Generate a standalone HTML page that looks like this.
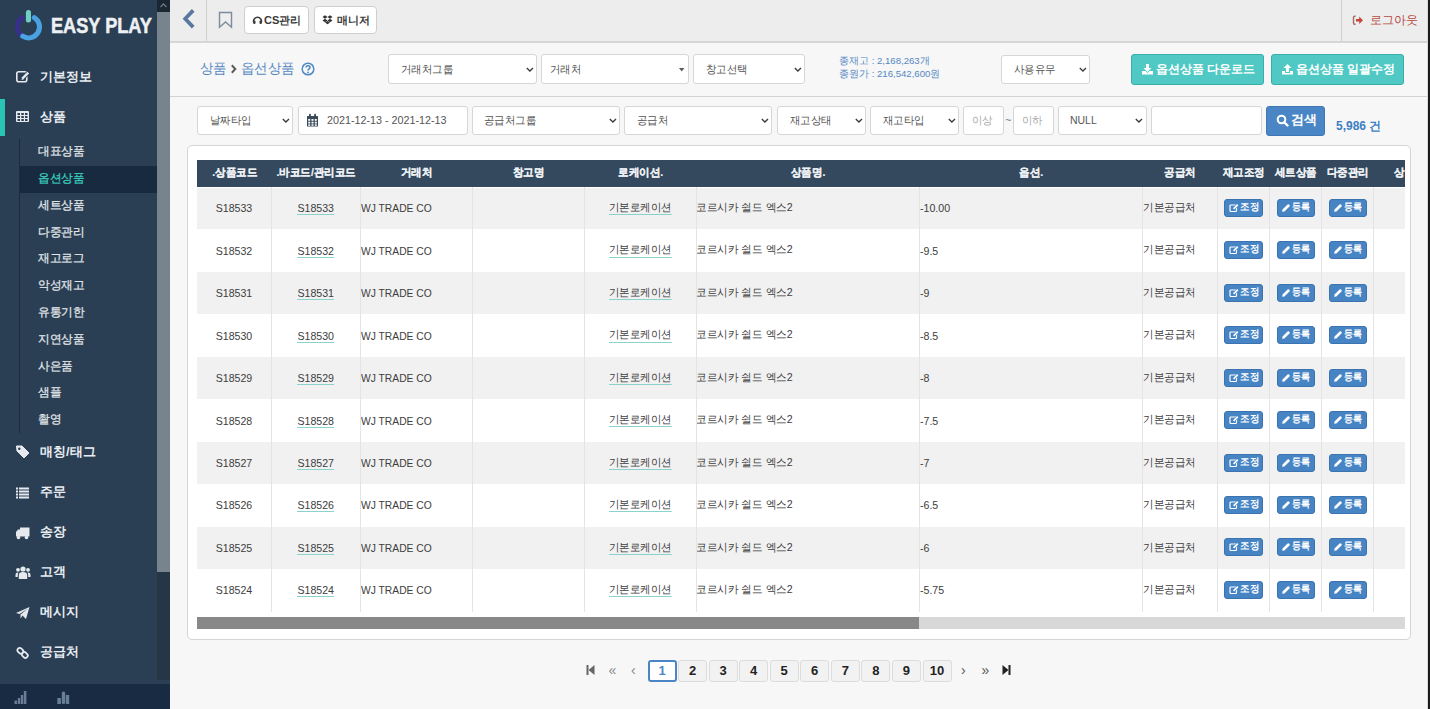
<!DOCTYPE html><html><head><meta charset="utf-8"><style>
*{box-sizing:border-box;margin:0;padding:0}
html,body{width:1430px;height:709px;overflow:hidden;background:#f7f7f7;font-family:"Liberation Sans",sans-serif;color:#73879c;position:relative}
div,span{position:absolute;white-space:nowrap}
.mi{left:40px;font-size:13px;font-weight:bold;color:#e9edf1;line-height:20px}
.sub{left:38px;font-size:12px;transform:scaleX(0.975);transform-origin:0 0;color:#e2e6ea;line-height:18px}
.ic{left:16px}
.hbtn{top:6px;height:28px;background:#fff;border:1px solid #cfcfcf;border-radius:4px;font-size:12px;font-weight:bold;color:#333;line-height:26px}
.sel{background:#fff;border:1px solid #d6d6d6;border-radius:3px;font-size:11.5px;color:#555;line-height:28px}
.chev{width:6px;height:6px;border-right:1.6px solid #333;border-bottom:1.6px solid #333;transform:rotate(45deg)}
.tbtn{top:54px;height:31px;background:#50c9c4;border:1px solid #3aaea9;border-radius:3px;color:#fff;font-size:13px;font-weight:bold;line-height:29px}
.th{top:159px;height:27px;line-height:27px;color:#eef1f4;font-size:11px;transform:scaleX(0.955) translateX(0.7px);-webkit-text-stroke:0.2px #eef1f4;font-weight:bold;text-align:center}
.row{left:197px;width:1208px}
.cb{width:1px;background:#e4e4e4}
.td{font-size:10.6px;color:#3d3d3d;line-height:16px}
.lnk{border-bottom:1px solid #8ad2cc}
.bb{width:39px;height:18px;background:#4784c4;border:1px solid #3a73b0;border-radius:3px;color:#fff;font-size:10px;font-weight:bold;line-height:16px;text-align:center}
.pg{top:660px;width:29px;height:22px;border:1px solid #dcdcdc;background:#f2f2f2;border-radius:3px;font-size:13px;font-weight:bold;color:#222;text-align:center;line-height:20px}
</style></head><body>
<div style="left:0;top:0;width:170px;height:709px;background:#2a3f54"></div>
<div style="left:157px;top:0;width:13px;height:680px;background:#253647"></div>
<div style="left:157px;top:0;width:13px;height:12px;background:#1a2632"></div>
<svg style="position:absolute;left:157px;top:0" width="13" height="12"><path d="M3.5 7 L6.5 4 L9.5 7" stroke="#6b7580" stroke-width="1.3" fill="none"/></svg>
<div style="left:157px;top:12px;width:13px;height:560px;background:#77838d"></div>
<div style="left:0;top:684px;width:170px;height:25px;background:#182b42"></div>
<svg style="position:absolute;left:0;top:684px" width="170" height="25"><g fill="#687d96"><rect x="14.5" y="16.5" width="2.5" height="3.5"/><rect x="17.8" y="14" width="2.4" height="6"/><rect x="20.8" y="11" width="2.4" height="9"/><rect x="23.8" y="7" width="2.6" height="13"/><rect x="57.3" y="14" width="3.6" height="6"/><rect x="61.8" y="7.5" width="3.4" height="12.5" rx="1.5"/><rect x="65.8" y="11" width="3.4" height="9"/></g></svg>
<svg style="position:absolute;left:10px;top:6px" width="40" height="40" viewBox="0 0 40 40"><path d="M13.82 10.8 A11 11 0 0 0 12.73 30.23" stroke="#372e8e" stroke-width="4.6" fill="none"/><path d="M12.73 30.23 A11 11 0 0 0 24.31 11.52" stroke="#4aa2e2" stroke-width="5" fill="none" stroke-linecap="round"/><rect x="15.9" y="3.9" width="5.1" height="12.7" rx="2.5" fill="#70cfc4"/></svg>
<div style="left:51px;top:10.5px;font-size:22px;font-weight:bold;color:#eef1f4;line-height:30px;transform-origin:0 0;transform:scaleX(0.825);-webkit-text-stroke:0.5px #eef1f4">EASY PLAY</div>
<svg style="position:absolute;left:14px;top:68px" width="18" height="18" viewBox="0 0 18 18"><rect x="2.8" y="3.8" width="10" height="10" rx="2" stroke="#e6eaee" stroke-width="1.6" fill="none"/><path d="M8 11 L14.5 4.5" stroke="#2a3f54" stroke-width="4"/><path d="M8.3 10.7 L14.3 4.7" stroke="#e6eaee" stroke-width="2.4"/><path d="M7.5 12 L8 10 L9.5 11.5Z" fill="#e6eaee"/></svg>
<svg style="position:absolute;left:14px;top:108px" width="18" height="18" viewBox="0 0 18 18"><rect x="2" y="3" width="13" height="11" rx="1" fill="#e6eaee"/><g fill="#2a3f54"><rect x="3.5" y="5" width="2.5" height="2"/><rect x="7.3" y="5" width="2.5" height="2"/><rect x="11" y="5" width="2.5" height="2"/><rect x="3.5" y="8" width="2.5" height="2"/><rect x="7.3" y="8" width="2.5" height="2"/><rect x="11" y="8" width="2.5" height="2"/><rect x="3.5" y="11" width="2.5" height="2"/><rect x="7.3" y="11" width="2.5" height="2"/><rect x="11" y="11" width="2.5" height="2"/></g></svg>
<svg style="position:absolute;left:14px;top:443px" width="18" height="18" viewBox="0 0 18 18"><path d="M2.5 3 L8 3 L15 10 L10 15 L3 8 Z" fill="#e6eaee" stroke="#e6eaee" stroke-width="1" stroke-linejoin="round"/><circle cx="5.3" cy="5.8" r="1.2" fill="#2a3f54"/></svg>
<svg style="position:absolute;left:14px;top:484px" width="18" height="18" viewBox="0 0 18 18"><g fill="#e6eaee"><rect x="2" y="3.5" width="2" height="2"/><rect x="5" y="3.5" width="10" height="2"/><rect x="2" y="6.5" width="2" height="2"/><rect x="5" y="6.5" width="10" height="2"/><rect x="2" y="9.5" width="2" height="2"/><rect x="5" y="9.5" width="10" height="2"/><rect x="2" y="12.5" width="2" height="2"/><rect x="5" y="12.5" width="10" height="2"/></g></svg>
<svg style="position:absolute;left:14px;top:524px" width="18" height="18" viewBox="0 0 18 18"><g fill="#e6eaee"><path d="M6 3.5 H15.5 V12.5 H6 Z"/><path d="M2 8 L4 5.5 H6 V12.5 H2 Z"/><circle cx="4.5" cy="13.5" r="1.8"/><circle cx="12.5" cy="13.5" r="1.8"/></g></svg>
<svg style="position:absolute;left:14px;top:564px" width="18" height="18" viewBox="0 0 18 18"><g fill="#e6eaee"><circle cx="9" cy="5" r="2.6"/><circle cx="4" cy="5.8" r="1.9"/><circle cx="14" cy="5.8" r="1.9"/><path d="M4.8 15 V11 Q4.8 8 9 8 Q13.2 8 13.2 11 V15Z"/><path d="M1.5 13 V10.5 Q1.5 8.4 4 8.4 L4.6 8.6 Q3.8 9.6 3.8 11 V13Z"/><path d="M16.5 13 V10.5 Q16.5 8.4 14 8.4 L13.4 8.6 Q14.2 9.6 14.2 11 V13Z"/></g></svg>
<svg style="position:absolute;left:14px;top:604px" width="18" height="18" viewBox="0 0 18 18"><path d="M2 9 L15.5 3 L12 15 L8.5 11.5 L6.5 14.5 L6.5 10.5 L14 4.5 L5.5 10 Z" fill="#e6eaee"/></svg>
<svg style="position:absolute;left:14px;top:644px" width="18" height="18" viewBox="0 0 18 18"><g stroke="#e6eaee" stroke-width="1.8" fill="none"><rect x="3.2" y="4.5" width="6.2" height="4.6" rx="2" transform="rotate(45 6.3 6.8)"/><rect x="7.7" y="8.7" width="6.2" height="4.6" rx="2" transform="rotate(45 10.8 11)"/></g></svg>
<div style="left:0;top:99px;width:4.5px;height:37px;background:#2bc5b6"></div>
<div class="mi" style="top:66.5px">기본정보</div>
<div class="mi" style="top:106.5px">상품</div>
<div class="mi" style="top:441.5px">매칭/태그</div>
<div class="mi" style="top:482.0px">주문</div>
<div class="mi" style="top:522.0px">송장</div>
<div class="mi" style="top:562.0px">고객</div>
<div class="mi" style="top:602.0px">메시지</div>
<div class="mi" style="top:642.0px">공급처</div>
<div style="left:18.7px;top:139px;width:1.4px;height:294px;background:#1d2c3c"></div>
<div style="left:20px;top:166px;width:137px;height:27px;background:#172a40"></div>
<div class="sub" style="top:142.2px;color:#e2e6ea;-webkit-text-stroke:0.25px #e2e6ea">대표상품</div>
<div class="sub" style="top:169.0px;color:#3ccdbd;-webkit-text-stroke:0.25px #3ccdbd">옵션상품</div>
<div class="sub" style="top:195.8px;color:#e2e6ea;-webkit-text-stroke:0.25px #e2e6ea">세트상품</div>
<div class="sub" style="top:222.6px;color:#e2e6ea;-webkit-text-stroke:0.25px #e2e6ea">다중관리</div>
<div class="sub" style="top:249.4px;color:#e2e6ea;-webkit-text-stroke:0.25px #e2e6ea">재고로그</div>
<div class="sub" style="top:276.2px;color:#e2e6ea;-webkit-text-stroke:0.25px #e2e6ea">악성재고</div>
<div class="sub" style="top:303.0px;color:#e2e6ea;-webkit-text-stroke:0.25px #e2e6ea">유통기한</div>
<div class="sub" style="top:329.8px;color:#e2e6ea;-webkit-text-stroke:0.25px #e2e6ea">지연상품</div>
<div class="sub" style="top:356.6px;color:#e2e6ea;-webkit-text-stroke:0.25px #e2e6ea">사은품</div>
<div class="sub" style="top:383.4px;color:#e2e6ea;-webkit-text-stroke:0.25px #e2e6ea">샘플</div>
<div class="sub" style="top:410.2px;color:#e2e6ea;-webkit-text-stroke:0.25px #e2e6ea">촬영</div>
<div style="left:170px;top:0;width:1258px;height:41px;background:#ededed"></div>
<div style="left:170px;top:41px;width:1258px;height:1.5px;background:#d6d6d6"></div>
<div style="left:206px;top:0;width:1px;height:41px;background:#cfcfcf"></div>
<div style="left:1341px;top:0;width:1px;height:41px;background:#cfcfcf"></div>
<svg style="position:absolute;left:180px;top:8px" width="18" height="22"><path d="M13.2 2.4 L5.2 10.8 L13.2 19.1" stroke="#5878a0" stroke-width="3.7" fill="none"/></svg>
<svg style="position:absolute;left:216px;top:10px" width="19" height="20"><path d="M3.5 2.5 H15.5 V17.3 L9.5 12 L3.5 17.3 Z" stroke="#7d8c9c" stroke-width="1.4" fill="none" stroke-linejoin="miter"/></svg>
<div class="hbtn" style="left:244px;width:65px"></div>
<svg style="position:absolute;left:251.5px;top:15px" width="11" height="10" viewBox="0 0 11 10"><path d="M1.7 7.6 A4 4 0 1 1 9.3 7.6" stroke="#3a3a3a" stroke-width="1.5" fill="none"/><rect x="1.2" y="5.6" width="2.3" height="3.4" rx="0.9" fill="#3a3a3a"/><rect x="7.5" y="5.6" width="2.3" height="3.4" rx="0.9" fill="#3a3a3a"/></svg>
<div style="left:264px;top:12px;font-size:11px;font-weight:bold;color:#3a3a3a;line-height:16px">CS관리</div>
<div class="hbtn" style="left:314px;width:63px"></div>
<svg style="position:absolute;left:322px;top:14px" width="11" height="11" viewBox="0 0 11 11"><g fill="#333"><path d="M0.5 3 L3 1.3 L5.5 3 L3 4.7Z"/><path d="M5.5 3 L8 1.3 L10.5 3 L8 4.7Z"/><path d="M0.5 6.5 L3 4.8 L5.5 6.5 L3 8.2Z"/><path d="M5.5 6.5 L8 4.8 L10.5 6.5 L8 8.2Z"/><path d="M3 8.6 L5.5 7 L8 8.6 L5.5 10.3Z"/></g></svg>
<div style="left:336.5px;top:12px;font-size:11px;font-weight:bold;color:#3a3a3a;line-height:16px">매니저</div>
<svg style="position:absolute;left:1352px;top:15px" width="12" height="11" viewBox="0 0 12 11"><path d="M3.6 1.3 H2.6 Q1.5 1.3 1.5 2.5 V8 Q1.5 9.2 2.6 9.2 H3.6" stroke="#a86a60" stroke-width="1.4" fill="none"/><path d="M4 4.1 H7.2 V1.6 L11 5.25 L7.2 8.9 V6.4 H4Z" fill="#c4463a"/></svg>
<div style="left:1370px;top:11.5px;font-size:11.5px;color:#b54a3f;line-height:16px">로그아웃</div>
<div style="left:1427px;top:0;width:1px;height:709px;background:#dcdcdc"></div>
<div style="left:1428px;top:0;width:2px;height:709px;background:#1a1a1a"></div>
<div style="left:199.5px;top:58.5px;font-size:14px;color:#5587c2;line-height:18px;transform:scaleX(0.96);transform-origin:0 0">상품</div>
<svg style="position:absolute;left:229px;top:63px" width="9" height="12"><path d="M2.8 2.3 L6.3 6 L2.8 9.7" stroke="#5a5a5a" stroke-width="2" fill="none"/></svg>
<div style="left:240.5px;top:58.5px;font-size:14px;color:#5587c2;line-height:18px;transform:scaleX(0.96);transform-origin:0 0">옵선상품</div>
<svg style="position:absolute;left:301px;top:61.5px" width="14" height="14" viewBox="0 0 14 14"><circle cx="7" cy="7" r="5.8" stroke="#4f88c6" stroke-width="1.5" fill="none"/><path d="M5 5.6 Q5 3.8 7 3.8 Q9 3.8 9 5.5 Q9 6.6 7.6 7.2 Q7 7.5 7 8.6" stroke="#4f88c6" stroke-width="1.5" fill="none"/><circle cx="7" cy="10.4" r="0.9" fill="#4f88c6"/></svg>
<div class="sel" style="left:388.0px;top:54.0px;width:149.0px;height:30.0px"></div>
<div style="left:401.0px;top:60.5px;font-size:11px;color:#555;line-height:16px;transform:scaleX(0.95);transform-origin:0 0">거래처그룹</div>
<svg style="position:absolute;left:525.8px;top:66.7px" width="9" height="6"><path d="M0.8 1 L3.9 4 L7 1" stroke="#3a3a3a" stroke-width="1.35" fill="none"/></svg>
<div class="sel" style="left:541.0px;top:54.0px;width:148.0px;height:30.0px"></div>
<div style="left:550.0px;top:60.5px;font-size:11px;color:#555;line-height:16px;transform:scaleX(0.95);transform-origin:0 0">거래처</div>
<svg style="position:absolute;left:678.6px;top:68.2px" width="6" height="4"><path d="M0 0 H5.4 L2.7 3.6Z" fill="#5a5a5a"/></svg>
<div class="sel" style="left:693.0px;top:54.0px;width:112.0px;height:30.0px"></div>
<div style="left:706.0px;top:60.5px;font-size:11px;color:#555;line-height:16px;transform:scaleX(0.95);transform-origin:0 0">창고선택</div>
<svg style="position:absolute;left:793.8px;top:66.7px" width="9" height="6"><path d="M0.8 1 L3.9 4 L7 1" stroke="#3a3a3a" stroke-width="1.35" fill="none"/></svg>
<div style="left:839px;top:53.7px;font-size:9.6px;color:#5588c4;line-height:13.7px">종재고 : 2,168,263개<br>종원가 : 216,542,600원</div>
<div class="sel" style="left:1001.0px;top:54.5px;width:89.0px;height:29.5px"></div>
<div style="left:1014.0px;top:60.8px;font-size:11px;color:#555;line-height:16px;transform:scaleX(0.95);transform-origin:0 0">사용유무</div>
<svg style="position:absolute;left:1078.8px;top:67.0px" width="9" height="6"><path d="M0.8 1 L3.9 4 L7 1" stroke="#3a3a3a" stroke-width="1.35" fill="none"/></svg>
<div class="tbtn" style="left:1131px;width:133px"></div>
<svg style="position:absolute;left:1141px;top:63px" width="13" height="12" viewBox="0 0 13 12"><g fill="#fff"><path d="M5 1 H8 V5 H10.5 L6.5 9 L2.5 5 H5Z"/><path d="M1 8 H4.5 L6.5 10 L8.5 8 H12 V11.5 H1Z"/></g></svg>
<div style="left:1156px;top:61px;font-size:12px;font-weight:bold;color:#fff;line-height:16px">옵션상품 다운로드</div>
<div class="tbtn" style="left:1271px;width:133px"></div>
<svg style="position:absolute;left:1281px;top:63px" width="13" height="12" viewBox="0 0 13 12"><g fill="#fff"><path d="M5 9 H8 V5 H10.5 L6.5 1 L2.5 5 H5Z"/><path d="M1 8 H4 V10 H9 V8 H12 V11.5 H1Z"/></g></svg>
<div style="left:1296px;top:61px;font-size:12px;font-weight:bold;color:#fff;line-height:16px">옵션상품 일괄수정</div>
<div style="left:170px;top:96px;width:1257px;height:1px;background:#d2d2d2"></div>
<div class="sel" style="left:197.0px;top:106.0px;width:96.0px;height:29.0px"></div>
<div style="left:210.0px;top:112.0px;font-size:11px;color:#555;line-height:16px;transform:scaleX(0.95);transform-origin:0 0">날짜타입</div>
<svg style="position:absolute;left:281.8px;top:118.2px" width="9" height="6"><path d="M0.8 1 L3.9 4 L7 1" stroke="#3a3a3a" stroke-width="1.35" fill="none"/></svg>
<div class="sel" style="left:297.5px;top:106.0px;width:170.0px;height:29.0px"></div>
<div style="left:327.0px;top:112.0px;font-size:10.75px;color:#555;line-height:16px;transform:scaleX(1);transform-origin:0 0">2021-12-13 - 2021-12-13</div>
<svg style="position:absolute;left:306px;top:113px" width="13" height="14" viewBox="0 0 13 14"><g fill="#3b4a5a"><rect x="1" y="3" width="11" height="10.5" rx="0.5"/><rect x="3" y="0.8" width="1.8" height="3.5" rx="0.8"/><rect x="8.2" y="0.8" width="1.8" height="3.5" rx="0.8"/></g><g fill="#fff"><rect x="2.2" y="6" width="2" height="1.8"/><rect x="5.5" y="6" width="2" height="1.8"/><rect x="8.8" y="6" width="2" height="1.8"/><rect x="2.2" y="8.7" width="2" height="1.8"/><rect x="5.5" y="8.7" width="2" height="1.8"/><rect x="8.8" y="8.7" width="2" height="1.8"/><rect x="2.2" y="11.3" width="2" height="1.5"/><rect x="5.5" y="11.3" width="2" height="1.5"/><rect x="8.8" y="11.3" width="2" height="1.5"/></g></svg>
<div class="sel" style="left:471.5px;top:106.0px;width:148.5px;height:29.0px"></div>
<div style="left:484.0px;top:112.0px;font-size:11px;color:#555;line-height:16px;transform:scaleX(0.95);transform-origin:0 0">공급처그룹</div>
<svg style="position:absolute;left:608.8px;top:118.2px" width="9" height="6"><path d="M0.8 1 L3.9 4 L7 1" stroke="#3a3a3a" stroke-width="1.35" fill="none"/></svg>
<div class="sel" style="left:624.0px;top:106.0px;width:148.0px;height:29.0px"></div>
<div style="left:637.0px;top:112.0px;font-size:11px;color:#555;line-height:16px;transform:scaleX(0.95);transform-origin:0 0">공급처</div>
<svg style="position:absolute;left:760.8px;top:118.2px" width="9" height="6"><path d="M0.8 1 L3.9 4 L7 1" stroke="#3a3a3a" stroke-width="1.35" fill="none"/></svg>
<div class="sel" style="left:777.0px;top:106.0px;width:89.0px;height:29.0px"></div>
<div style="left:790.0px;top:112.0px;font-size:11px;color:#555;line-height:16px;transform:scaleX(0.95);transform-origin:0 0">재고상태</div>
<svg style="position:absolute;left:854.8px;top:118.2px" width="9" height="6"><path d="M0.8 1 L3.9 4 L7 1" stroke="#3a3a3a" stroke-width="1.35" fill="none"/></svg>
<div class="sel" style="left:870.0px;top:106.0px;width:89.0px;height:29.0px"></div>
<div style="left:883.0px;top:112.0px;font-size:11px;color:#555;line-height:16px;transform:scaleX(0.95);transform-origin:0 0">재고타입</div>
<svg style="position:absolute;left:947.8px;top:118.2px" width="9" height="6"><path d="M0.8 1 L3.9 4 L7 1" stroke="#3a3a3a" stroke-width="1.35" fill="none"/></svg>
<div class="sel" style="left:963.0px;top:106.0px;width:41.0px;height:29.0px"></div>
<div style="left:972.0px;top:112.0px;font-size:11px;color:#aaa;line-height:16px;transform:scaleX(0.95);transform-origin:0 0">이상</div>
<div style="left:1005px;top:112px;font-size:11px;color:#777;line-height:16px">~</div>
<div class="sel" style="left:1013.0px;top:106.0px;width:40.5px;height:29.0px"></div>
<div style="left:1022.0px;top:112.0px;font-size:11px;color:#aaa;line-height:16px;transform:scaleX(0.95);transform-origin:0 0">이하</div>
<div class="sel" style="left:1058.0px;top:106.0px;width:88.5px;height:29.0px"></div>
<div style="left:1070.0px;top:112.0px;font-size:11px;color:#555;line-height:16px;transform:scaleX(0.95);transform-origin:0 0">NULL</div>
<svg style="position:absolute;left:1135.3px;top:118.2px" width="9" height="6"><path d="M0.8 1 L3.9 4 L7 1" stroke="#3a3a3a" stroke-width="1.35" fill="none"/></svg>
<div class="sel" style="left:1151.0px;top:106.0px;width:111.0px;height:29.0px"></div>
<div style="left:1160.0px;top:112.0px;font-size:11px;color:#555;line-height:16px;transform:scaleX(0.95);transform-origin:0 0"></div>
<div style="left:1266px;top:105.5px;width:58.5px;height:30.5px;background:#4a86c6;border:1px solid #3f78b5;border-radius:3px"></div>
<svg style="position:absolute;left:1276px;top:114px" width="13" height="13" viewBox="0 0 13 13"><circle cx="5.5" cy="5.5" r="3.8" stroke="#fff" stroke-width="2" fill="none"/><path d="M8.3 8.3 L11.5 11.5" stroke="#fff" stroke-width="2.4" stroke-linecap="round"/></svg>
<div style="left:1291px;top:112px;font-size:13px;font-weight:bold;color:#fff;line-height:16px">검색</div>
<div style="left:1336px;top:117.5px;font-size:12px;font-weight:bold;color:#3d7fc1;line-height:16px">5,986 건</div>
<div style="left:187px;top:145px;width:1224px;height:495px;background:#fff;border:1px solid #d4d4d4;border-radius:5px"></div>
<div style="left:197px;top:160px;width:1208px;height:27px;background:#34495e"></div>
<div class="th" style="left:197.0px;width:74.0px">.상품코드</div>
<div class="th" style="left:271.0px;width:89.0px">.바코드/관리코드</div>
<div class="th" style="left:360.0px;width:112.0px">거래처</div>
<div class="th" style="left:472.0px;width:112.0px">창고명</div>
<div class="th" style="left:584.0px;width:112.0px">로케이션.</div>
<div class="th" style="left:696.0px;width:223.0px">상품명.</div>
<div class="th" style="left:919.0px;width:223.0px">옵션.</div>
<div class="th" style="left:1142.0px;width:75.0px">공급처</div>
<div class="th" style="left:1217.0px;width:52.0px">재고조정</div>
<div class="th" style="left:1269.0px;width:52.0px">세트상품</div>
<div class="th" style="left:1321.0px;width:52.0px">다중관리</div>
<div class="th" style="left:1393px;text-align:left">상</div>
<div class="row" style="top:188.0px;height:41.45px;background:#f1f1f1"></div>
<div class="td" style="left:197px;width:74px;text-align:center;top:200.2px">S18533</div>
<div class="td" style="left:271px;width:89.5px;text-align:center;top:200.2px"><span class="lnk" style="position:static">S18533</span></div>
<div class="td" style="left:361px;top:201.2px;font-size:10.3px">WJ TRADE CO</div>
<div class="td" style="left:608.5px;top:198.9px;font-size:11px;transform:scaleX(0.95);transform-origin:0 0"><span class="lnk" style="position:static;padding-bottom:1.3px">기본로케이션</span></div>
<div class="td" style="left:695.5px;top:198.9px;font-size:11px;transform:scaleX(0.965);transform-origin:0 0">코르시카 쉴드 엑스2</div>
<div class="td" style="left:920px;top:200.2px">-10.00</div>
<div class="td" style="left:1143px;top:198.9px;font-size:11px;transform:scaleX(0.955);transform-origin:0 0">기본공급처</div>
<div class="bb" style="left:1223.5px;top:198.8px;width:39px"></div>
<svg style="position:absolute;left:1228.5px;top:202.8px" width="10" height="10" viewBox="0 0 10 10"><rect x="1" y="2" width="6.5" height="6.5" rx="1" stroke="#fff" stroke-width="1.2" fill="none"/><path d="M4.5 6 L9 1.5" stroke="#4784c4" stroke-width="2.8"/><path d="M4.6 5.9 L8.8 1.7" stroke="#fff" stroke-width="1.7"/></svg>
<div style="left:1239.5px;top:199.8px;font-size:10px;font-weight:bold;color:#fff;line-height:14px;transform:scaleX(0.95);transform-origin:0 0">조정</div>
<div class="bb" style="left:1276.5px;top:198.8px;width:38px"></div>
<svg style="position:absolute;left:1280.7px;top:202.8px" width="10" height="10" viewBox="0 0 10 10"><path d="M1.2 8.8 L1.5 6.6 L6.6 1.5 Q7.3 0.8 8 1.5 L8.5 2 Q9.2 2.7 8.5 3.4 L3.4 8.5 Z" fill="#fff"/></svg>
<div style="left:1291.5px;top:199.8px;font-size:10px;font-weight:bold;color:#fff;line-height:14px;transform:scaleX(0.9);transform-origin:0 0">등록</div>
<div class="bb" style="left:1328.5px;top:198.8px;width:38px"></div>
<svg style="position:absolute;left:1332.7px;top:202.8px" width="10" height="10" viewBox="0 0 10 10"><path d="M1.2 8.8 L1.5 6.6 L6.6 1.5 Q7.3 0.8 8 1.5 L8.5 2 Q9.2 2.7 8.5 3.4 L3.4 8.5 Z" fill="#fff"/></svg>
<div style="left:1343.5px;top:199.8px;font-size:10px;font-weight:bold;color:#fff;line-height:14px;transform:scaleX(0.9);transform-origin:0 0">등록</div>
<div class="td" style="left:197px;width:74px;text-align:center;top:242.7px">S18532</div>
<div class="td" style="left:271px;width:89.5px;text-align:center;top:242.7px"><span class="lnk" style="position:static">S18532</span></div>
<div class="td" style="left:361px;top:243.7px;font-size:10.3px">WJ TRADE CO</div>
<div class="td" style="left:608.5px;top:241.4px;font-size:11px;transform:scaleX(0.95);transform-origin:0 0"><span class="lnk" style="position:static;padding-bottom:1.3px">기본로케이션</span></div>
<div class="td" style="left:695.5px;top:241.4px;font-size:11px;transform:scaleX(0.965);transform-origin:0 0">코르시카 쉴드 엑스2</div>
<div class="td" style="left:920px;top:242.7px">-9.5</div>
<div class="td" style="left:1143px;top:241.4px;font-size:11px;transform:scaleX(0.955);transform-origin:0 0">기본공급처</div>
<div class="bb" style="left:1223.5px;top:241.2px;width:39px"></div>
<svg style="position:absolute;left:1228.5px;top:245.2px" width="10" height="10" viewBox="0 0 10 10"><rect x="1" y="2" width="6.5" height="6.5" rx="1" stroke="#fff" stroke-width="1.2" fill="none"/><path d="M4.5 6 L9 1.5" stroke="#4784c4" stroke-width="2.8"/><path d="M4.6 5.9 L8.8 1.7" stroke="#fff" stroke-width="1.7"/></svg>
<div style="left:1239.5px;top:242.2px;font-size:10px;font-weight:bold;color:#fff;line-height:14px;transform:scaleX(0.95);transform-origin:0 0">조정</div>
<div class="bb" style="left:1276.5px;top:241.2px;width:38px"></div>
<svg style="position:absolute;left:1280.7px;top:245.2px" width="10" height="10" viewBox="0 0 10 10"><path d="M1.2 8.8 L1.5 6.6 L6.6 1.5 Q7.3 0.8 8 1.5 L8.5 2 Q9.2 2.7 8.5 3.4 L3.4 8.5 Z" fill="#fff"/></svg>
<div style="left:1291.5px;top:242.2px;font-size:10px;font-weight:bold;color:#fff;line-height:14px;transform:scaleX(0.9);transform-origin:0 0">등록</div>
<div class="bb" style="left:1328.5px;top:241.2px;width:38px"></div>
<svg style="position:absolute;left:1332.7px;top:245.2px" width="10" height="10" viewBox="0 0 10 10"><path d="M1.2 8.8 L1.5 6.6 L6.6 1.5 Q7.3 0.8 8 1.5 L8.5 2 Q9.2 2.7 8.5 3.4 L3.4 8.5 Z" fill="#fff"/></svg>
<div style="left:1343.5px;top:242.2px;font-size:10px;font-weight:bold;color:#fff;line-height:14px;transform:scaleX(0.9);transform-origin:0 0">등록</div>
<div class="row" style="top:271.9px;height:42.45px;background:#f1f1f1"></div>
<div class="td" style="left:197px;width:74px;text-align:center;top:285.1px">S18531</div>
<div class="td" style="left:271px;width:89.5px;text-align:center;top:285.1px"><span class="lnk" style="position:static">S18531</span></div>
<div class="td" style="left:361px;top:286.1px;font-size:10.3px">WJ TRADE CO</div>
<div class="td" style="left:608.5px;top:283.8px;font-size:11px;transform:scaleX(0.95);transform-origin:0 0"><span class="lnk" style="position:static;padding-bottom:1.3px">기본로케이션</span></div>
<div class="td" style="left:695.5px;top:283.8px;font-size:11px;transform:scaleX(0.965);transform-origin:0 0">코르시카 쉴드 엑스2</div>
<div class="td" style="left:920px;top:285.1px">-9</div>
<div class="td" style="left:1143px;top:283.8px;font-size:11px;transform:scaleX(0.955);transform-origin:0 0">기본공급처</div>
<div class="bb" style="left:1223.5px;top:283.6px;width:39px"></div>
<svg style="position:absolute;left:1228.5px;top:287.6px" width="10" height="10" viewBox="0 0 10 10"><rect x="1" y="2" width="6.5" height="6.5" rx="1" stroke="#fff" stroke-width="1.2" fill="none"/><path d="M4.5 6 L9 1.5" stroke="#4784c4" stroke-width="2.8"/><path d="M4.6 5.9 L8.8 1.7" stroke="#fff" stroke-width="1.7"/></svg>
<div style="left:1239.5px;top:284.6px;font-size:10px;font-weight:bold;color:#fff;line-height:14px;transform:scaleX(0.95);transform-origin:0 0">조정</div>
<div class="bb" style="left:1276.5px;top:283.6px;width:38px"></div>
<svg style="position:absolute;left:1280.7px;top:287.6px" width="10" height="10" viewBox="0 0 10 10"><path d="M1.2 8.8 L1.5 6.6 L6.6 1.5 Q7.3 0.8 8 1.5 L8.5 2 Q9.2 2.7 8.5 3.4 L3.4 8.5 Z" fill="#fff"/></svg>
<div style="left:1291.5px;top:284.6px;font-size:10px;font-weight:bold;color:#fff;line-height:14px;transform:scaleX(0.9);transform-origin:0 0">등록</div>
<div class="bb" style="left:1328.5px;top:283.6px;width:38px"></div>
<svg style="position:absolute;left:1332.7px;top:287.6px" width="10" height="10" viewBox="0 0 10 10"><path d="M1.2 8.8 L1.5 6.6 L6.6 1.5 Q7.3 0.8 8 1.5 L8.5 2 Q9.2 2.7 8.5 3.4 L3.4 8.5 Z" fill="#fff"/></svg>
<div style="left:1343.5px;top:284.6px;font-size:10px;font-weight:bold;color:#fff;line-height:14px;transform:scaleX(0.9);transform-origin:0 0">등록</div>
<div class="td" style="left:197px;width:74px;text-align:center;top:327.6px">S18530</div>
<div class="td" style="left:271px;width:89.5px;text-align:center;top:327.6px"><span class="lnk" style="position:static">S18530</span></div>
<div class="td" style="left:361px;top:328.6px;font-size:10.3px">WJ TRADE CO</div>
<div class="td" style="left:608.5px;top:326.3px;font-size:11px;transform:scaleX(0.95);transform-origin:0 0"><span class="lnk" style="position:static;padding-bottom:1.3px">기본로케이션</span></div>
<div class="td" style="left:695.5px;top:326.3px;font-size:11px;transform:scaleX(0.965);transform-origin:0 0">코르시카 쉴드 엑스2</div>
<div class="td" style="left:920px;top:327.6px">-8.5</div>
<div class="td" style="left:1143px;top:326.3px;font-size:11px;transform:scaleX(0.955);transform-origin:0 0">기본공급처</div>
<div class="bb" style="left:1223.5px;top:326.1px;width:39px"></div>
<svg style="position:absolute;left:1228.5px;top:330.1px" width="10" height="10" viewBox="0 0 10 10"><rect x="1" y="2" width="6.5" height="6.5" rx="1" stroke="#fff" stroke-width="1.2" fill="none"/><path d="M4.5 6 L9 1.5" stroke="#4784c4" stroke-width="2.8"/><path d="M4.6 5.9 L8.8 1.7" stroke="#fff" stroke-width="1.7"/></svg>
<div style="left:1239.5px;top:327.1px;font-size:10px;font-weight:bold;color:#fff;line-height:14px;transform:scaleX(0.95);transform-origin:0 0">조정</div>
<div class="bb" style="left:1276.5px;top:326.1px;width:38px"></div>
<svg style="position:absolute;left:1280.7px;top:330.1px" width="10" height="10" viewBox="0 0 10 10"><path d="M1.2 8.8 L1.5 6.6 L6.6 1.5 Q7.3 0.8 8 1.5 L8.5 2 Q9.2 2.7 8.5 3.4 L3.4 8.5 Z" fill="#fff"/></svg>
<div style="left:1291.5px;top:327.1px;font-size:10px;font-weight:bold;color:#fff;line-height:14px;transform:scaleX(0.9);transform-origin:0 0">등록</div>
<div class="bb" style="left:1328.5px;top:326.1px;width:38px"></div>
<svg style="position:absolute;left:1332.7px;top:330.1px" width="10" height="10" viewBox="0 0 10 10"><path d="M1.2 8.8 L1.5 6.6 L6.6 1.5 Q7.3 0.8 8 1.5 L8.5 2 Q9.2 2.7 8.5 3.4 L3.4 8.5 Z" fill="#fff"/></svg>
<div style="left:1343.5px;top:327.1px;font-size:10px;font-weight:bold;color:#fff;line-height:14px;transform:scaleX(0.9);transform-origin:0 0">등록</div>
<div class="row" style="top:356.8px;height:42.45px;background:#f1f1f1"></div>
<div class="td" style="left:197px;width:74px;text-align:center;top:370.1px">S18529</div>
<div class="td" style="left:271px;width:89.5px;text-align:center;top:370.1px"><span class="lnk" style="position:static">S18529</span></div>
<div class="td" style="left:361px;top:371.1px;font-size:10.3px">WJ TRADE CO</div>
<div class="td" style="left:608.5px;top:368.8px;font-size:11px;transform:scaleX(0.95);transform-origin:0 0"><span class="lnk" style="position:static;padding-bottom:1.3px">기본로케이션</span></div>
<div class="td" style="left:695.5px;top:368.8px;font-size:11px;transform:scaleX(0.965);transform-origin:0 0">코르시카 쉴드 엑스2</div>
<div class="td" style="left:920px;top:370.1px">-8</div>
<div class="td" style="left:1143px;top:368.8px;font-size:11px;transform:scaleX(0.955);transform-origin:0 0">기본공급처</div>
<div class="bb" style="left:1223.5px;top:368.6px;width:39px"></div>
<svg style="position:absolute;left:1228.5px;top:372.6px" width="10" height="10" viewBox="0 0 10 10"><rect x="1" y="2" width="6.5" height="6.5" rx="1" stroke="#fff" stroke-width="1.2" fill="none"/><path d="M4.5 6 L9 1.5" stroke="#4784c4" stroke-width="2.8"/><path d="M4.6 5.9 L8.8 1.7" stroke="#fff" stroke-width="1.7"/></svg>
<div style="left:1239.5px;top:369.6px;font-size:10px;font-weight:bold;color:#fff;line-height:14px;transform:scaleX(0.95);transform-origin:0 0">조정</div>
<div class="bb" style="left:1276.5px;top:368.6px;width:38px"></div>
<svg style="position:absolute;left:1280.7px;top:372.6px" width="10" height="10" viewBox="0 0 10 10"><path d="M1.2 8.8 L1.5 6.6 L6.6 1.5 Q7.3 0.8 8 1.5 L8.5 2 Q9.2 2.7 8.5 3.4 L3.4 8.5 Z" fill="#fff"/></svg>
<div style="left:1291.5px;top:369.6px;font-size:10px;font-weight:bold;color:#fff;line-height:14px;transform:scaleX(0.9);transform-origin:0 0">등록</div>
<div class="bb" style="left:1328.5px;top:368.6px;width:38px"></div>
<svg style="position:absolute;left:1332.7px;top:372.6px" width="10" height="10" viewBox="0 0 10 10"><path d="M1.2 8.8 L1.5 6.6 L6.6 1.5 Q7.3 0.8 8 1.5 L8.5 2 Q9.2 2.7 8.5 3.4 L3.4 8.5 Z" fill="#fff"/></svg>
<div style="left:1343.5px;top:369.6px;font-size:10px;font-weight:bold;color:#fff;line-height:14px;transform:scaleX(0.9);transform-origin:0 0">등록</div>
<div class="td" style="left:197px;width:74px;text-align:center;top:412.5px">S18528</div>
<div class="td" style="left:271px;width:89.5px;text-align:center;top:412.5px"><span class="lnk" style="position:static">S18528</span></div>
<div class="td" style="left:361px;top:413.5px;font-size:10.3px">WJ TRADE CO</div>
<div class="td" style="left:608.5px;top:411.2px;font-size:11px;transform:scaleX(0.95);transform-origin:0 0"><span class="lnk" style="position:static;padding-bottom:1.3px">기본로케이션</span></div>
<div class="td" style="left:695.5px;top:411.2px;font-size:11px;transform:scaleX(0.965);transform-origin:0 0">코르시카 쉴드 엑스2</div>
<div class="td" style="left:920px;top:412.5px">-7.5</div>
<div class="td" style="left:1143px;top:411.2px;font-size:11px;transform:scaleX(0.955);transform-origin:0 0">기본공급처</div>
<div class="bb" style="left:1223.5px;top:411.0px;width:39px"></div>
<svg style="position:absolute;left:1228.5px;top:415.0px" width="10" height="10" viewBox="0 0 10 10"><rect x="1" y="2" width="6.5" height="6.5" rx="1" stroke="#fff" stroke-width="1.2" fill="none"/><path d="M4.5 6 L9 1.5" stroke="#4784c4" stroke-width="2.8"/><path d="M4.6 5.9 L8.8 1.7" stroke="#fff" stroke-width="1.7"/></svg>
<div style="left:1239.5px;top:412.0px;font-size:10px;font-weight:bold;color:#fff;line-height:14px;transform:scaleX(0.95);transform-origin:0 0">조정</div>
<div class="bb" style="left:1276.5px;top:411.0px;width:38px"></div>
<svg style="position:absolute;left:1280.7px;top:415.0px" width="10" height="10" viewBox="0 0 10 10"><path d="M1.2 8.8 L1.5 6.6 L6.6 1.5 Q7.3 0.8 8 1.5 L8.5 2 Q9.2 2.7 8.5 3.4 L3.4 8.5 Z" fill="#fff"/></svg>
<div style="left:1291.5px;top:412.0px;font-size:10px;font-weight:bold;color:#fff;line-height:14px;transform:scaleX(0.9);transform-origin:0 0">등록</div>
<div class="bb" style="left:1328.5px;top:411.0px;width:38px"></div>
<svg style="position:absolute;left:1332.7px;top:415.0px" width="10" height="10" viewBox="0 0 10 10"><path d="M1.2 8.8 L1.5 6.6 L6.6 1.5 Q7.3 0.8 8 1.5 L8.5 2 Q9.2 2.7 8.5 3.4 L3.4 8.5 Z" fill="#fff"/></svg>
<div style="left:1343.5px;top:412.0px;font-size:10px;font-weight:bold;color:#fff;line-height:14px;transform:scaleX(0.9);transform-origin:0 0">등록</div>
<div class="row" style="top:441.7px;height:42.45px;background:#f1f1f1"></div>
<div class="td" style="left:197px;width:74px;text-align:center;top:455.0px">S18527</div>
<div class="td" style="left:271px;width:89.5px;text-align:center;top:455.0px"><span class="lnk" style="position:static">S18527</span></div>
<div class="td" style="left:361px;top:456.0px;font-size:10.3px">WJ TRADE CO</div>
<div class="td" style="left:608.5px;top:453.7px;font-size:11px;transform:scaleX(0.95);transform-origin:0 0"><span class="lnk" style="position:static;padding-bottom:1.3px">기본로케이션</span></div>
<div class="td" style="left:695.5px;top:453.7px;font-size:11px;transform:scaleX(0.965);transform-origin:0 0">코르시카 쉴드 엑스2</div>
<div class="td" style="left:920px;top:455.0px">-7</div>
<div class="td" style="left:1143px;top:453.7px;font-size:11px;transform:scaleX(0.955);transform-origin:0 0">기본공급처</div>
<div class="bb" style="left:1223.5px;top:453.5px;width:39px"></div>
<svg style="position:absolute;left:1228.5px;top:457.5px" width="10" height="10" viewBox="0 0 10 10"><rect x="1" y="2" width="6.5" height="6.5" rx="1" stroke="#fff" stroke-width="1.2" fill="none"/><path d="M4.5 6 L9 1.5" stroke="#4784c4" stroke-width="2.8"/><path d="M4.6 5.9 L8.8 1.7" stroke="#fff" stroke-width="1.7"/></svg>
<div style="left:1239.5px;top:454.5px;font-size:10px;font-weight:bold;color:#fff;line-height:14px;transform:scaleX(0.95);transform-origin:0 0">조정</div>
<div class="bb" style="left:1276.5px;top:453.5px;width:38px"></div>
<svg style="position:absolute;left:1280.7px;top:457.5px" width="10" height="10" viewBox="0 0 10 10"><path d="M1.2 8.8 L1.5 6.6 L6.6 1.5 Q7.3 0.8 8 1.5 L8.5 2 Q9.2 2.7 8.5 3.4 L3.4 8.5 Z" fill="#fff"/></svg>
<div style="left:1291.5px;top:454.5px;font-size:10px;font-weight:bold;color:#fff;line-height:14px;transform:scaleX(0.9);transform-origin:0 0">등록</div>
<div class="bb" style="left:1328.5px;top:453.5px;width:38px"></div>
<svg style="position:absolute;left:1332.7px;top:457.5px" width="10" height="10" viewBox="0 0 10 10"><path d="M1.2 8.8 L1.5 6.6 L6.6 1.5 Q7.3 0.8 8 1.5 L8.5 2 Q9.2 2.7 8.5 3.4 L3.4 8.5 Z" fill="#fff"/></svg>
<div style="left:1343.5px;top:454.5px;font-size:10px;font-weight:bold;color:#fff;line-height:14px;transform:scaleX(0.9);transform-origin:0 0">등록</div>
<div class="td" style="left:197px;width:74px;text-align:center;top:497.4px">S18526</div>
<div class="td" style="left:271px;width:89.5px;text-align:center;top:497.4px"><span class="lnk" style="position:static">S18526</span></div>
<div class="td" style="left:361px;top:498.4px;font-size:10.3px">WJ TRADE CO</div>
<div class="td" style="left:608.5px;top:496.1px;font-size:11px;transform:scaleX(0.95);transform-origin:0 0"><span class="lnk" style="position:static;padding-bottom:1.3px">기본로케이션</span></div>
<div class="td" style="left:695.5px;top:496.1px;font-size:11px;transform:scaleX(0.965);transform-origin:0 0">코르시카 쉴드 엑스2</div>
<div class="td" style="left:920px;top:497.4px">-6.5</div>
<div class="td" style="left:1143px;top:496.1px;font-size:11px;transform:scaleX(0.955);transform-origin:0 0">기본공급처</div>
<div class="bb" style="left:1223.5px;top:495.9px;width:39px"></div>
<svg style="position:absolute;left:1228.5px;top:499.9px" width="10" height="10" viewBox="0 0 10 10"><rect x="1" y="2" width="6.5" height="6.5" rx="1" stroke="#fff" stroke-width="1.2" fill="none"/><path d="M4.5 6 L9 1.5" stroke="#4784c4" stroke-width="2.8"/><path d="M4.6 5.9 L8.8 1.7" stroke="#fff" stroke-width="1.7"/></svg>
<div style="left:1239.5px;top:496.9px;font-size:10px;font-weight:bold;color:#fff;line-height:14px;transform:scaleX(0.95);transform-origin:0 0">조정</div>
<div class="bb" style="left:1276.5px;top:495.9px;width:38px"></div>
<svg style="position:absolute;left:1280.7px;top:499.9px" width="10" height="10" viewBox="0 0 10 10"><path d="M1.2 8.8 L1.5 6.6 L6.6 1.5 Q7.3 0.8 8 1.5 L8.5 2 Q9.2 2.7 8.5 3.4 L3.4 8.5 Z" fill="#fff"/></svg>
<div style="left:1291.5px;top:496.9px;font-size:10px;font-weight:bold;color:#fff;line-height:14px;transform:scaleX(0.9);transform-origin:0 0">등록</div>
<div class="bb" style="left:1328.5px;top:495.9px;width:38px"></div>
<svg style="position:absolute;left:1332.7px;top:499.9px" width="10" height="10" viewBox="0 0 10 10"><path d="M1.2 8.8 L1.5 6.6 L6.6 1.5 Q7.3 0.8 8 1.5 L8.5 2 Q9.2 2.7 8.5 3.4 L3.4 8.5 Z" fill="#fff"/></svg>
<div style="left:1343.5px;top:496.9px;font-size:10px;font-weight:bold;color:#fff;line-height:14px;transform:scaleX(0.9);transform-origin:0 0">등록</div>
<div class="row" style="top:526.6px;height:42.45px;background:#f1f1f1"></div>
<div class="td" style="left:197px;width:74px;text-align:center;top:539.9px">S18525</div>
<div class="td" style="left:271px;width:89.5px;text-align:center;top:539.9px"><span class="lnk" style="position:static">S18525</span></div>
<div class="td" style="left:361px;top:540.9px;font-size:10.3px">WJ TRADE CO</div>
<div class="td" style="left:608.5px;top:538.6px;font-size:11px;transform:scaleX(0.95);transform-origin:0 0"><span class="lnk" style="position:static;padding-bottom:1.3px">기본로케이션</span></div>
<div class="td" style="left:695.5px;top:538.6px;font-size:11px;transform:scaleX(0.965);transform-origin:0 0">코르시카 쉴드 엑스2</div>
<div class="td" style="left:920px;top:539.9px">-6</div>
<div class="td" style="left:1143px;top:538.6px;font-size:11px;transform:scaleX(0.955);transform-origin:0 0">기본공급처</div>
<div class="bb" style="left:1223.5px;top:538.4px;width:39px"></div>
<svg style="position:absolute;left:1228.5px;top:542.4px" width="10" height="10" viewBox="0 0 10 10"><rect x="1" y="2" width="6.5" height="6.5" rx="1" stroke="#fff" stroke-width="1.2" fill="none"/><path d="M4.5 6 L9 1.5" stroke="#4784c4" stroke-width="2.8"/><path d="M4.6 5.9 L8.8 1.7" stroke="#fff" stroke-width="1.7"/></svg>
<div style="left:1239.5px;top:539.4px;font-size:10px;font-weight:bold;color:#fff;line-height:14px;transform:scaleX(0.95);transform-origin:0 0">조정</div>
<div class="bb" style="left:1276.5px;top:538.4px;width:38px"></div>
<svg style="position:absolute;left:1280.7px;top:542.4px" width="10" height="10" viewBox="0 0 10 10"><path d="M1.2 8.8 L1.5 6.6 L6.6 1.5 Q7.3 0.8 8 1.5 L8.5 2 Q9.2 2.7 8.5 3.4 L3.4 8.5 Z" fill="#fff"/></svg>
<div style="left:1291.5px;top:539.4px;font-size:10px;font-weight:bold;color:#fff;line-height:14px;transform:scaleX(0.9);transform-origin:0 0">등록</div>
<div class="bb" style="left:1328.5px;top:538.4px;width:38px"></div>
<svg style="position:absolute;left:1332.7px;top:542.4px" width="10" height="10" viewBox="0 0 10 10"><path d="M1.2 8.8 L1.5 6.6 L6.6 1.5 Q7.3 0.8 8 1.5 L8.5 2 Q9.2 2.7 8.5 3.4 L3.4 8.5 Z" fill="#fff"/></svg>
<div style="left:1343.5px;top:539.4px;font-size:10px;font-weight:bold;color:#fff;line-height:14px;transform:scaleX(0.9);transform-origin:0 0">등록</div>
<div class="td" style="left:197px;width:74px;text-align:center;top:582.3px">S18524</div>
<div class="td" style="left:271px;width:89.5px;text-align:center;top:582.3px"><span class="lnk" style="position:static">S18524</span></div>
<div class="td" style="left:361px;top:583.3px;font-size:10.3px">WJ TRADE CO</div>
<div class="td" style="left:608.5px;top:581.0px;font-size:11px;transform:scaleX(0.95);transform-origin:0 0"><span class="lnk" style="position:static;padding-bottom:1.3px">기본로케이션</span></div>
<div class="td" style="left:695.5px;top:581.0px;font-size:11px;transform:scaleX(0.965);transform-origin:0 0">코르시카 쉴드 엑스2</div>
<div class="td" style="left:920px;top:582.3px">-5.75</div>
<div class="td" style="left:1143px;top:581.0px;font-size:11px;transform:scaleX(0.955);transform-origin:0 0">기본공급처</div>
<div class="bb" style="left:1223.5px;top:580.8px;width:39px"></div>
<svg style="position:absolute;left:1228.5px;top:584.8px" width="10" height="10" viewBox="0 0 10 10"><rect x="1" y="2" width="6.5" height="6.5" rx="1" stroke="#fff" stroke-width="1.2" fill="none"/><path d="M4.5 6 L9 1.5" stroke="#4784c4" stroke-width="2.8"/><path d="M4.6 5.9 L8.8 1.7" stroke="#fff" stroke-width="1.7"/></svg>
<div style="left:1239.5px;top:581.8px;font-size:10px;font-weight:bold;color:#fff;line-height:14px;transform:scaleX(0.95);transform-origin:0 0">조정</div>
<div class="bb" style="left:1276.5px;top:580.8px;width:38px"></div>
<svg style="position:absolute;left:1280.7px;top:584.8px" width="10" height="10" viewBox="0 0 10 10"><path d="M1.2 8.8 L1.5 6.6 L6.6 1.5 Q7.3 0.8 8 1.5 L8.5 2 Q9.2 2.7 8.5 3.4 L3.4 8.5 Z" fill="#fff"/></svg>
<div style="left:1291.5px;top:581.8px;font-size:10px;font-weight:bold;color:#fff;line-height:14px;transform:scaleX(0.9);transform-origin:0 0">등록</div>
<div class="bb" style="left:1328.5px;top:580.8px;width:38px"></div>
<svg style="position:absolute;left:1332.7px;top:584.8px" width="10" height="10" viewBox="0 0 10 10"><path d="M1.2 8.8 L1.5 6.6 L6.6 1.5 Q7.3 0.8 8 1.5 L8.5 2 Q9.2 2.7 8.5 3.4 L3.4 8.5 Z" fill="#fff"/></svg>
<div style="left:1343.5px;top:581.8px;font-size:10px;font-weight:bold;color:#fff;line-height:14px;transform:scaleX(0.9);transform-origin:0 0">등록</div>
<div class="cb" style="left:271.0px;top:187px;height:425px"></div>
<div class="cb" style="left:360.0px;top:187px;height:425px"></div>
<div class="cb" style="left:472.0px;top:187px;height:425px"></div>
<div class="cb" style="left:584.0px;top:187px;height:425px"></div>
<div class="cb" style="left:696.0px;top:187px;height:425px"></div>
<div class="cb" style="left:919.0px;top:187px;height:425px"></div>
<div class="cb" style="left:1142.0px;top:187px;height:425px"></div>
<div class="cb" style="left:1217.0px;top:187px;height:425px"></div>
<div class="cb" style="left:1269.0px;top:187px;height:425px"></div>
<div class="cb" style="left:1321.0px;top:187px;height:425px"></div>
<div class="cb" style="left:1373.0px;top:187px;height:425px"></div>
<div style="left:197px;top:617px;width:1208px;height:12px;background:#d8d8d8"></div>
<div style="left:197px;top:617px;width:722px;height:12px;background:#888"></div>
<svg style="position:absolute;left:585px;top:664px" width="12" height="12" viewBox="0 0 12 12"><rect x="1.5" y="1" width="2" height="10" fill="#666"/><path d="M9.5 1 V11 L3.5 6Z" fill="#666"/></svg>
<div style="left:608.5px;top:661px;font-size:14px;color:#888;line-height:18px">«</div>
<div style="left:631px;top:661px;font-size:14px;color:#888;line-height:18px">‹</div>
<div class="pg" style="left:647.5px;border:2px solid #4a86c6;background:#fff;color:#4a86c6;line-height:18px">1</div>
<div class="pg" style="left:678.0px">2</div>
<div class="pg" style="left:708.6px">3</div>
<div class="pg" style="left:739.1px">4</div>
<div class="pg" style="left:769.7px">5</div>
<div class="pg" style="left:800.2px">6</div>
<div class="pg" style="left:830.8px">7</div>
<div class="pg" style="left:861.4px">8</div>
<div class="pg" style="left:891.9px">9</div>
<div class="pg" style="left:922.5px">10</div>
<div style="left:961px;top:661px;font-size:14px;color:#555;line-height:18px">›</div>
<div style="left:981.5px;top:661px;font-size:14px;color:#555;line-height:18px">»</div>
<svg style="position:absolute;left:1000px;top:664px" width="12" height="12" viewBox="0 0 12 12"><path d="M2.5 1 V11 L8.5 6Z" fill="#222"/><rect x="8.5" y="1" width="2" height="10" fill="#222"/></svg>
</body></html>
